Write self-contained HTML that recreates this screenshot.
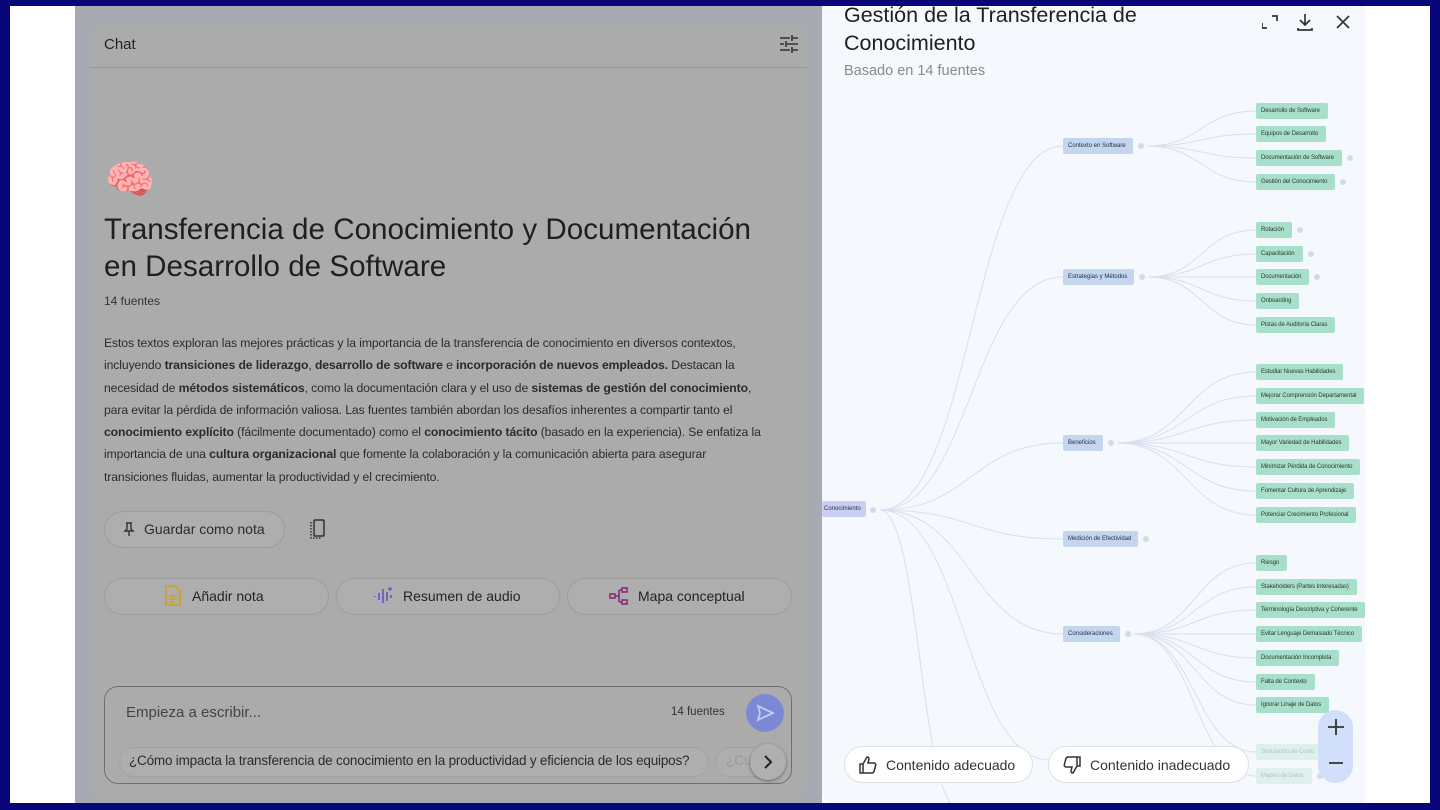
<!DOCTYPE html>
<html><head><meta charset="utf-8">
<style>
*{margin:0;padding:0;box-sizing:border-box}
body{width:1440px;height:810px;overflow:hidden;background:#07077a;font-family:"Liberation Sans",sans-serif;position:relative}
.abs{position:absolute}
#white{left:10px;top:6px;width:1420px;height:797px;background:#fff}
#dim{left:75px;top:6px;width:747px;height:797px;background:#a7a9b3}
#card{left:90px;top:23px;width:717px;height:777px;background:#ababab;border-radius:16px}
.t{color:#232323;white-space:nowrap}
.pill{border:1px solid #9d9d9d;border-radius:20px;background:#aeaeae}
#right{left:822px;top:6px;width:543px;height:797px;background:#f5f8fc;border-radius:0 0 0 12px;overflow:hidden}
.leaf{position:absolute;height:16px;line-height:16px;font-size:6px;padding:0 5px;background:#a8dfcb;color:#2a3a33;border-radius:2px;white-space:nowrap;letter-spacing:-.1px}
.br{position:absolute;height:16px;line-height:16px;font-size:6px;padding:0 5px;background:#c4d6ef;color:#263040;border-radius:2px;white-space:nowrap}
.dot{position:absolute;width:6px;height:6px;border-radius:50%;background:#d3dbe8}
.fb{position:absolute;top:740px;height:37px;border:1px solid #dde1e7;border-radius:19px;background:#fff;font-size:14px;color:#333;display:flex;align-items:center}
</style></head><body>
<div class="abs" id="white"></div>
<div class="abs" id="dim"></div>
<div class="abs" id="card">
  <div class="abs t" style="left:14px;top:13px;font-size:15px">Chat</div>
  <svg class="abs" style="left:689px;top:11px" width="20" height="20" viewBox="0 0 20 20" fill="none" stroke="#333" stroke-width="1.6"><path d="M1 4h10M14 4h5M13 1v6M1 10h4M8 10h11M7 7v6M1 16h10M14 16h5M13 13v6"/></svg>
  <div class="abs" style="left:0;top:44px;width:717px;height:1px;background:#949494"></div>
  <div class="abs" style="left:15px;top:134px;font-size:40px;line-height:46px">🧠</div>
  <div class="abs t" style="left:14px;top:188px;font-size:29.6px;line-height:37px;color:#1f1f1f">Transferencia de Conocimiento y Documentación<br>en Desarrollo de Software</div>
  <div class="abs t" style="left:14px;top:271px;font-size:12px;color:#333">14 fuentes</div>
  <div class="abs t" style="left:14px;top:309px;font-size:12.2px;line-height:22.3px;color:#2b2b2b;letter-spacing:-.1px">Estos textos exploran las mejores prácticas y la importancia de la transferencia de conocimiento en diversos contextos,<br>incluyendo <b>transiciones de liderazgo</b>, <b>desarrollo de software</b> e <b>incorporación de nuevos empleados.</b> Destacan la<br>necesidad de <b>métodos sistemáticos</b>, como la documentación clara y el uso de <b>sistemas de gestión del conocimiento</b>,<br>para evitar la pérdida de información valiosa. Las fuentes también abordan los desafíos inherentes a compartir tanto el<br><b>conocimiento explícito</b> (fácilmente documentado) como el <b>conocimiento tácito</b> (basado en la experiencia). Se enfatiza la<br>importancia de una <b>cultura organizacional</b> que fomente la colaboración y la comunicación abierta para asegurar<br>transiciones fluidas, aumentar la productividad y el crecimiento.</div>
  <div class="abs pill" style="left:14px;top:488px;width:181px;height:37px"></div>
  <svg class="abs" style="left:33px;top:499px" width="12" height="15" viewBox="0 0 12 15" fill="none" stroke="#333" stroke-width="1.4"><path d="M3 1h6M4 1v6L2 9h8L8 7V1M6 9v5"/></svg>
  <div class="abs t" style="left:54px;top:498px;font-size:14px;color:#2b2b2b">Guardar como nota</div>
  <svg class="abs" style="left:219px;top:495px" width="18" height="22" viewBox="0 0 18 22" fill="none" stroke="#333" stroke-width="1.5"><rect x="5" y="2" width="10" height="16" rx="1"/><path d="M2 4v16h10" stroke-dasharray="1.5 1.5"/></svg>
  <div class="abs pill" style="left:14px;top:555px;width:225px;height:37px"></div>
  <div class="abs pill" style="left:246px;top:555px;width:224px;height:37px"></div>
  <div class="abs pill" style="left:477px;top:555px;width:225px;height:37px"></div>
  <svg class="abs" style="left:75px;top:562px" width="16" height="21" viewBox="0 0 16 21"><path d="M1 1h9l5 5v14H1z" fill="none" stroke="#c9a227" stroke-width="1.8"/><path d="M4 11h8M4 14h8M4 17h5" stroke="#c9a227" stroke-width="1.5"/></svg>
  <div class="abs t" style="left:102px;top:565px;font-size:14px">Añadir nota</div>
  <svg class="abs" style="left:284px;top:563px" width="20" height="20" viewBox="0 0 20 20" stroke="#5a55c8" stroke-width="1.6"><path d="M1 10v1M5 7v7M9 3v14M13 6v9M17 9v3"/><path d="M16 1v4M14 3h4" stroke-width="1.2"/></svg>
  <div class="abs t" style="left:313px;top:565px;font-size:14px">Resumen de audio</div>
  <svg class="abs" style="left:519px;top:564px" width="20" height="18" viewBox="0 0 20 18" fill="none" stroke="#8a2a7a" stroke-width="1.6"><rect x="1" y="7" width="5" height="4"/><rect x="13" y="1" width="5" height="4"/><rect x="13" y="13" width="5" height="4"/><path d="M6 9h4M10 3v12M10 3h3M10 15h3"/></svg>
  <div class="abs t" style="left:548px;top:565px;font-size:14px">Mapa conceptual</div>
  <div class="abs" style="left:14px;top:663px;width:688px;height:98px;border:1px solid #6f6f6f;border-radius:14px;background:#ababab"></div>
  <div class="abs t" style="left:36px;top:681px;font-size:15px;color:#444">Empieza a escribir...</div>
  <div class="abs t" style="left:581px;top:683px;font-size:11.5px;color:#333">14 fuentes</div>
  <div class="abs" style="left:656px;top:671px;width:38px;height:38px;border-radius:50%;background:#7c8ad6"></div>
  <svg class="abs" style="left:665px;top:680px" width="20" height="20" viewBox="0 0 20 20" fill="none" stroke="#c6ccef" stroke-width="1.8"><path d="M3 3l15 7-15 7 2-7z"/></svg>
  <div class="abs pill" style="left:29px;top:724px;width:590px;height:30px;border-color:#a2a2a2"></div>
  <div class="abs t" style="left:39px;top:730px;font-size:13.5px;color:#2b2b2b;letter-spacing:-.2px">¿Cómo impacta la transferencia de conocimiento en la productividad y eficiencia de los equipos?</div>
  <div class="abs pill" style="left:625px;top:724px;width:60px;height:30px;border-color:#a2a2a2"></div>
  <div class="abs t" style="left:636px;top:730px;font-size:13.5px;color:#999">¿Cu</div>
  <div class="abs" style="left:660px;top:721px;width:36px;height:36px;border-radius:50%;background:#b0b0b0;box-shadow:0 1px 3px rgba(0,0,0,.4)"></div>
  <svg class="abs" style="left:673px;top:732px" width="10" height="14" viewBox="0 0 10 14" fill="none" stroke="#222" stroke-width="2"><path d="M2 1l6 6-6 6"/></svg>
</div>

<div class="abs" id="right">
  <svg id="map" class="abs" style="left:0;top:0" width="543" height="797"></svg>
  <div id="nodes"></div>
  <div class="abs t" style="left:22px;top:-5px;font-size:21.5px;line-height:28px;color:#1f1f1f">Gestión de la Transferencia de<br>Conocimiento</div>
  <div class="abs t" style="left:22px;top:57px;font-size:14.5px;color:#8a8a8a">Basado en 14 fuentes</div>
  <svg class="abs" style="left:440px;top:6px" width="100" height="20" viewBox="0 0 100 20" fill="none" stroke="#333" stroke-width="1.7"><path d="M0 11v5h5M10 4h5v5"/><path d="M43 2v11M38 8l5 5 5-5M36 16v2h14v-2"/><path d="M75 4l12 12M87 4L75 16"/></svg>
  <div class="abs" style="left:496px;top:704px;width:35px;height:73px;border-radius:18px;background:#d2dffa"></div>
  <svg class="abs" style="left:505px;top:712px" width="18" height="60" viewBox="0 0 18 60" stroke="#333" stroke-width="1.8"><path d="M9 1v16M1 9h16M2 45h14"/></svg>
  <div class="fb" style="left:22px;width:189px"><svg style="margin-left:14px" width="18" height="18" viewBox="0 0 18 18" fill="none" stroke="#333" stroke-width="1.5"><path d="M1 8h3v9H1zM4 8l4-7c1.5 0 2 1 2 2l-1 4h6c1 0 2 1 1.7 2l-1.5 6c-.3 1-1 2-2 2H4"/></svg><span style="margin-left:9px">Contenido adecuado</span></div>
  <div class="fb" style="left:226px;width:201px"><svg style="margin-left:14px" width="18" height="18" viewBox="0 0 18 18" fill="none" stroke="#333" stroke-width="1.5"><path d="M17 10h-3V1h3zM14 10l-4 7c-1.5 0-2-1-2-2l1-4H3c-1 0-2-1-1.7-2l1.5-6c.3-1 1-2 2-2H14"/></svg><span style="margin-left:9px">Contenido inadecuado</span></div>
</div>
<script>
var svg=document.getElementById('map'),N=document.getElementById('nodes');
var OX=822,OY=6;
function node(cls,x,y,t,extra){var d=document.createElement('div');d.className=cls;d.style.left=(x-OX)+'px';d.style.top=(y-OY-8)+'px';d.textContent=t;if(extra)d.style.cssText+=extra;N.appendChild(d);return d;}
function dot(x,y){var d=document.createElement('div');d.className='dot';d.style.left=(x-OX-3)+'px';d.style.top=(y-OY-3)+'px';N.appendChild(d);}
function path(x1,y1,x2,y2){var p=document.createElementNS('http://www.w3.org/2000/svg','path');x1-=OX;x2-=OX;y1-=OY;y2-=OY;var m=(x1+x2)/2;p.setAttribute('d','M'+x1+' '+y1+'C'+m+' '+y1+' '+m+' '+y2+' '+x2+' '+y2);p.setAttribute('fill','none');p.setAttribute('stroke','#d8e0ee');p.setAttribute('stroke-width','1');svg.appendChild(p);}
var B=[
['Contexto en Software',146,[['Desarrollo de Software',111],['Equipos de Desarrollo',134],['Documentación de Software',158,1],['Gestión del Conocimiento',182,1]]],
['Estrategias y Métodos',277,[['Rotación',230,1],['Capacitación',254,1],['Documentación',277,1],['Onboarding',301],['Pistas de Auditoría Claras',325]]],
['Beneficios',443,[['Estudiar Nuevas Habilidades',372],['Mejorar Comprensión Departamental',396],['Motivación de Empleados',420],['Mayor Variedad de Habilidades',443],['Minimizar Pérdida de Conocimiento',467],['Fomentar Cultura de Aprendizaje',491],['Potenciar Crecimiento Profesional',515]]],
['Medición de Efectividad',539,[]],
['Consideraciones',634,[['Riesgo',563],['Stakeholders (Partes Interesadas)',587],['Terminología Descriptiva y Coherente',610],['Evitar Lenguaje Demasiado Técnico',634],['Documentación Incompleta',658],['Falta de Contexto',682],['Ignorar Linaje de Datos',705],['Simulación de Costo',752,0,1],['Mapeo de Datos',776,1,1]]]
];
path(880,510,960,810);path(880,510,1050,760);
B.forEach(function(b){path(880,510,1063,b[1]);var n=node('br',1063,b[1],b[0]);var w=n.offsetWidth+2;n.style.width=w+'px';dot(1063+w+8,b[1]);
b[2].forEach(function(l){path(1063+w+14,b[1],1256,l[1]);var e=node('leaf',1256,l[1],l[0],l[3]?'opacity:.3':'');var ew=e.offsetWidth+3;e.style.width=ew+'px';if(l[2])dot(1256+ew+8,l[1]);});});
node('br',822,509,'Conocimiento','background:#cacff5;padding-left:2px');dot(873,510);
</script>
</body></html>
